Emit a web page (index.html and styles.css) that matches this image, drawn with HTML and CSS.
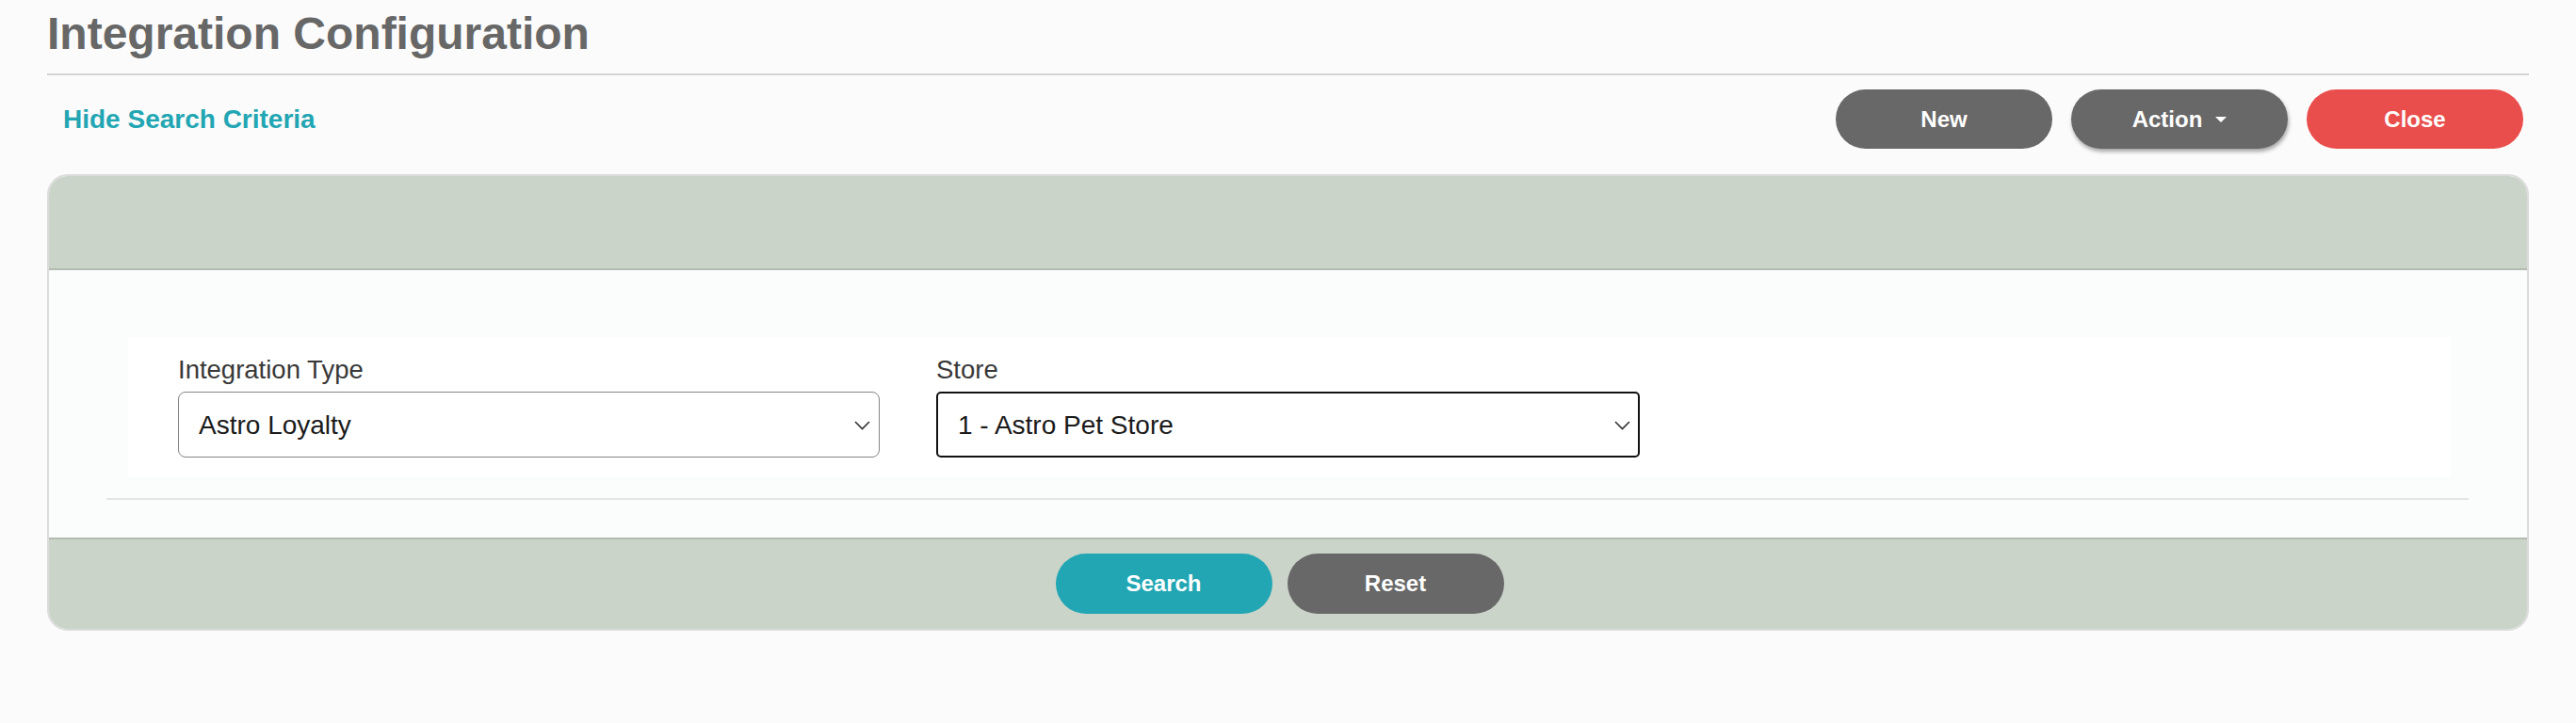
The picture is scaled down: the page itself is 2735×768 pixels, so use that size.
FILE: index.html
```html
<!DOCTYPE html>
<html lang="en">
<head>
<meta charset="utf-8">
<title>Integration Configuration</title>
<link rel="stylesheet" href="styles.css">
</head>
<body>
<div class="page">
  <h1 class="title">Integration Configuration</h1>
  <div class="toolbar">
    <a class="toggle" href="#">Hide Search Criteria</a>
    <div class="actions">
      <button class="btn btn-gray">New</button>
      <button class="btn btn-gray btn-action">Action<span class="caret"></span></button>
      <button class="btn btn-red">Close</button>
    </div>
  </div>
  <section class="panel">
    <div class="panel-head"></div>
    <div class="panel-body">
      <div class="criteria">
        <div class="field">
          <label class="field-label">Integration Type</label>
          <div class="select-wrap">
            <select class="select"><option>Astro Loyalty</option></select>
            <svg class="chev" width="17" height="10" viewBox="0 0 17 10"><path d="M1 1 L8.5 8.5 L16 1" fill="none" stroke="#333" stroke-width="1.6"/></svg>
          </div>
        </div>
        <div class="field">
          <label class="field-label">Store</label>
          <div class="select-wrap">
            <select class="select select-focus"><option>1 - Astro Pet Store</option></select>
            <svg class="chev" width="17" height="10" viewBox="0 0 17 10"><path d="M1 1 L8.5 8.5 L16 1" fill="none" stroke="#333" stroke-width="1.6"/></svg>
          </div>
        </div>
      </div>
      <div class="divider"></div>
    </div>
    <div class="panel-foot">
      <button class="btn btn-teal">Search</button>
      <button class="btn btn-gray">Reset</button>
    </div>
  </section>
</div>
</body>
</html>
```

FILE: styles.css
```css
html, body {
  margin: 0;
  padding: 0;
  background: #fbfbfb;
  font-family: "Liberation Sans", Arial, sans-serif;
}

.page {
  padding: 0 50px;
}

.title {
  margin: 0;
  padding: 4px 0 10px 0;
  line-height: 64px;
  font-size: 48px;
  font-weight: bold;
  color: #676767;
  border-bottom: 2px solid #d4d4d4;
}

.toolbar {
  display: flex;
  align-items: center;
  justify-content: space-between;
  margin-top: 15px;
  height: 63px;
  padding-left: 17px;
}

.toggle {
  font-size: 28px;
  font-weight: bold;
  color: #22a6b3;
  text-decoration: none;
}

.actions {
  display: flex;
  gap: 20px;
  margin-right: 6px;
}

.btn {
  width: 230px;
  height: 63px;
  border: none;
  border-radius: 32px;
  font-family: "Liberation Sans", Arial, sans-serif;
  font-size: 24px;
  font-weight: bold;
  color: #fff;
  padding: 0;
  display: inline-flex;
  align-items: center;
  justify-content: center;
}

.btn-gray { background: #686868; }
.btn-red { background: #ea4e4c; }
.btn-teal { background: #22a6b3; }

.btn-action {
  box-shadow: 1px 3px 4px rgba(0, 0, 0, 0.35);
}

.caret {
  display: inline-block;
  width: 0;
  height: 0;
  margin-left: 14px;
  border-top: 6px solid #fff;
  border-left: 6px solid transparent;
  border-right: 6px solid transparent;
}

.panel {
  margin-top: 27px;
  border: 2px solid #dcdcdc;
  border-radius: 22px;
  overflow: hidden;
  background: #fbfcfc;
}

.panel-head {
  height: 98px;
  background: #cad4c9;
  border-bottom: 2px solid #b1bbb0;
}

.panel-body {
  padding: 71px 62px 40px 61px;
}

.criteria {
  margin: 0 19px 0 23px;
  background: #fff;
  padding: 19px 30px 21px 53px;
  display: grid;
  grid-template-columns: 745px 747px;
  column-gap: 60px;
}

.field {
  display: flex;
  flex-direction: column;
}

.field-label {
  font-size: 27.5px;
  line-height: 32px;
  color: #383838;
  margin-bottom: 7px;
}

.select-wrap {
  position: relative;
}

.select {
  -webkit-appearance: none;
  appearance: none;
  width: 100%;
  height: 70px;
  box-sizing: border-box;
  border: 1.5px solid #858585;
  border-radius: 8px;
  background: #fff;
  font-family: "Liberation Sans", Arial, sans-serif;
  font-size: 28px;
  color: #1a1a1a;
  padding: 0 40px 0 21px;
  outline: none;
}

.select-focus {
  border: 2px solid #111;
  border-radius: 5px;
}

.chev {
  position: absolute;
  right: 10px;
  top: 31px;
}

.divider {
  margin-top: 22px;
  height: 2px;
  background: #e3e5e5;
}

.panel-foot {
  height: 97px;
  background: #cad4c9;
  border-top: 2px solid #b1bbb0;
  display: flex;
  justify-content: center;
  align-items: flex-start;
  gap: 16px;
  padding-top: 15px;
  box-sizing: border-box;
  padding-right: 18px;
}

.panel-foot .btn {
  height: 64px;
}
```
